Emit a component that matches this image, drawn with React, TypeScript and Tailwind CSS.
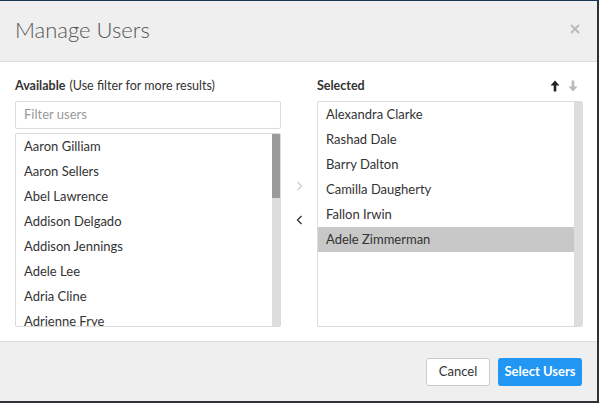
import React from "react";

const available = [
  "Aaron Gilliam",
  "Aaron Sellers",
  "Abel Lawrence",
  "Addison Delgado",
  "Addison Jennings",
  "Adele Lee",
  "Adria Cline",
  "Adrienne Frye",
];

const selected = [
  "Alexandra Clarke",
  "Rashad Dale",
  "Barry Dalton",
  "Camilla Daugherty",
  "Fallon Irwin",
  "Adele Zimmerman",
];

const font = { fontFamily: "Lato, 'Open Sans', sans-serif" };

function ArrowUp({ color }: { color: string }) {
  return (
    <svg width="10" height="12" viewBox="0 0 10 12">
      <path d="M5 0.5 L9.5 5.5 L6.3 5.5 L6.3 11.5 L3.7 11.5 L3.7 5.5 L0.5 5.5 Z" fill={color} />
    </svg>
  );
}

function ArrowDown({ color }: { color: string }) {
  return (
    <svg width="10" height="12" viewBox="0 0 10 12">
      <path d="M5 11.5 L9.5 6.5 L6.3 6.5 L6.3 0.5 L3.7 0.5 L3.7 6.5 L0.5 6.5 Z" fill={color} />
    </svg>
  );
}

export default function App() {
  return (
    <div className="w-[599px] h-[403px] bg-[#2e3136] overflow-hidden" style={font}>
      <div className="h-[1px] bg-[#1c3553]" />
      <div className="w-[597px] h-[400px] bg-white flex flex-col">
        {/* header */}
        <div className="h-[61px] bg-[#efefef] border-b border-[#dcdcdc] flex items-center justify-between pl-[15px] pr-[17px]">
          <div className="text-[22px] font-light text-[#555] leading-none -mt-[2px]">Manage Users</div>
          <svg width="10" height="10" viewBox="0 0 10 10" className="-mt-[4px]">
            <path d="M1 1 L9 9 M9 1 L1 9" stroke="#bbbbbb" strokeWidth="2" />
          </svg>
        </div>
        {/* body */}
        <div className="flex-1 flex pl-[15px] pr-[14px] pt-[14px]">
          {/* available */}
          <div className="w-[266px] flex flex-col">
            <div className="h-[20px] flex items-center text-[12.5px] text-[#333] mb-[5px]">
              <span className="font-bold">Available</span>
              <span className="ml-[4px]">(Use filter for more results)</span>
            </div>
            <div className="h-[28px] border border-[#dcdcdc] rounded-[2px] flex items-center pl-[8px] text-[13px] text-[#999]">
              Filter users
            </div>
            <div className="mt-[4px] h-[194px] border border-[#dcdcdc] rounded-[2px] flex overflow-hidden">
              <div className="flex-1 overflow-hidden">
                {available.map((n) => (
                  <div key={n} className="h-[25px] flex items-center pl-[8px] text-[13px] text-[#333] -mt-[0px]">
                    {n}
                  </div>
                ))}
              </div>
              <div className="w-[8px] bg-[#dddddd] flex flex-col">
                <div className="h-[64px] bg-[#9a9a9a]" />
              </div>
            </div>
          </div>
          {/* middle */}
          <div className="w-[36px] flex flex-col items-center pt-[105px] gap-[24px]">
            <svg width="7" height="10" viewBox="0 0 7 10">
              <path d="M1.5 1 L5.5 5 L1.5 9" stroke="#cccccc" strokeWidth="1.3" fill="none" />
            </svg>
            <svg width="7" height="10" viewBox="0 0 7 10">
              <path d="M5.5 1 L1.5 5 L5.5 9" stroke="#333333" strokeWidth="1.3" fill="none" />
            </svg>
          </div>
          {/* selected */}
          <div className="w-[266px] flex flex-col">
            <div className="h-[20px] flex items-center justify-between text-[12.5px] text-[#333] mb-[5px]">
              <span className="font-bold">Selected</span>
              <div className="flex items-center gap-[8px] pr-[5px]">
                <ArrowUp color="#222" />
                <ArrowDown color="#bbb" />
              </div>
            </div>
            <div className="h-[226px] border border-[#dcdcdc] rounded-[2px] flex overflow-hidden">
              <div className="flex-1 overflow-hidden">
                {selected.map((n, i) => (
                  <div
                    key={n}
                    className={
                      i === 5
                        ? "h-[25px] flex items-center pl-[8px] text-[13px] text-[#333] bg-[#c8c8c8]"
                        : "h-[25px] flex items-center pl-[8px] text-[13px] text-[#333]"
                    }
                  >
                    {n}
                  </div>
                ))}
              </div>
              <div className="w-[8px] bg-[#dddddd]" />
            </div>
          </div>
        </div>
        {/* footer */}
        <div className="h-[60px] bg-[#efefef] border-t border-[#dcdcdc] flex items-start justify-end gap-[8px] pr-[15px] pt-[16px]">
          <div className="w-[64px] h-[28px] bg-white border border-[#cccccc] rounded-[3px] flex items-center justify-center text-[13px] text-[#333]">
            Cancel
          </div>
          <div className="w-[84px] h-[28px] bg-[#2196f3] rounded-[3px] flex items-center justify-center text-[13px] text-white font-bold">
            Select Users
          </div>
        </div>
      </div>
    </div>
  );
}
